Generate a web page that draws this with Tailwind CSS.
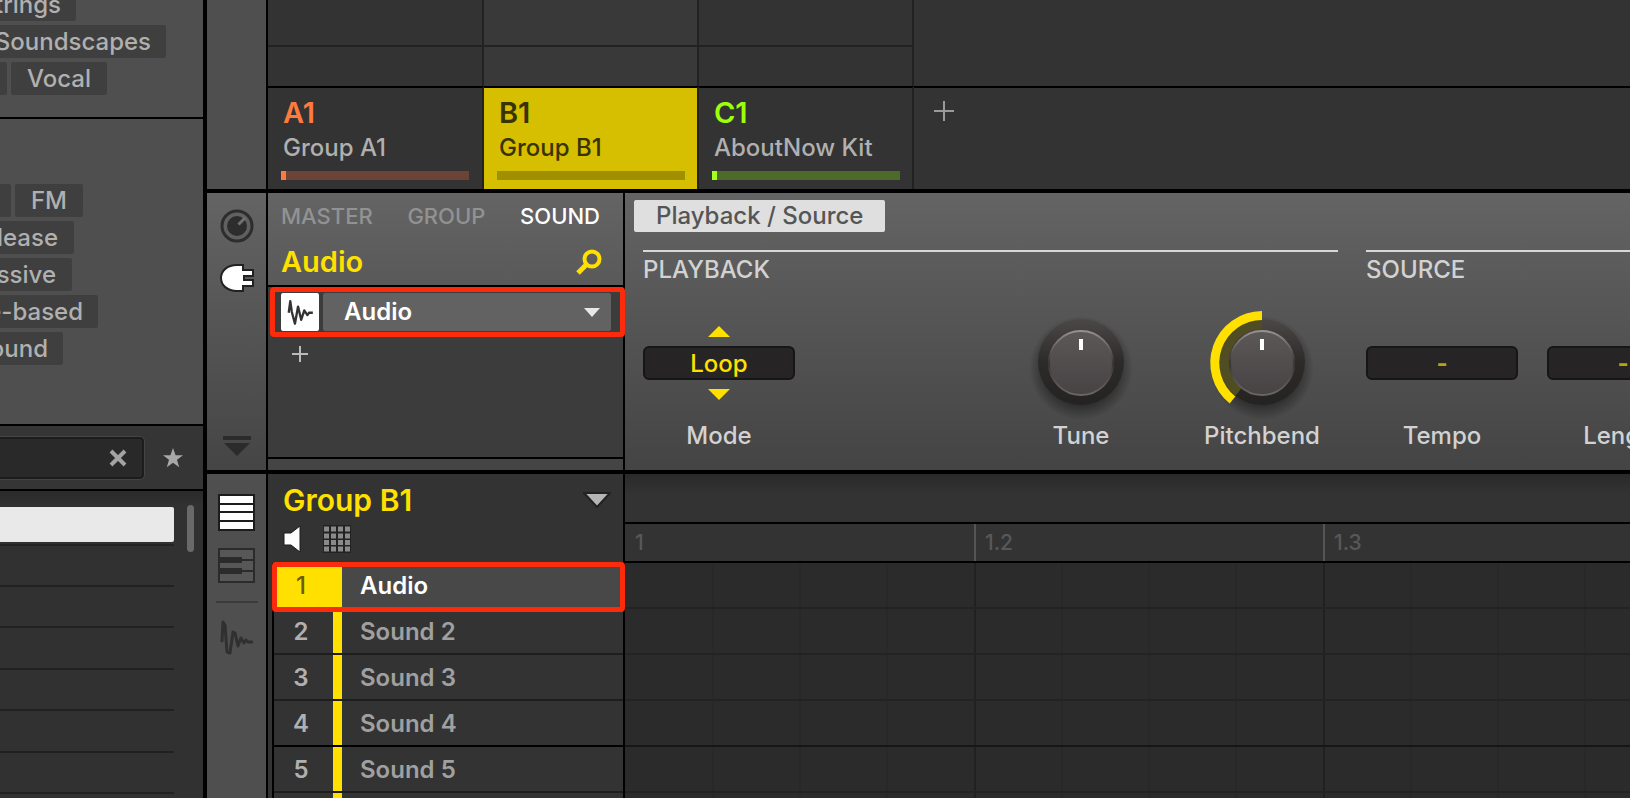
<!DOCTYPE html>
<html lang="en">
<head>
    <meta charset="UTF-8">
    <meta name="viewport" content="width=device-width, initial-scale=1.0">
    <title>Maschine - Group B1</title>
    <script src="https://cdn.jsdelivr.net/npm/@tailwindcss/browser@4"></script>
</head>
<body class="flex h-screen overflow-hidden bg-black font-['Inter','Liberation_Sans',sans-serif] text-[24px] font-medium text-[#b0b0b0]">

    <!-- Browser -->
    <aside class="flex w-[203px] shrink-0 flex-col overflow-hidden bg-[#4f4f4f]">
        <div class="flex h-[119px] shrink-0 flex-col justify-end gap-1 border-b-2 border-black pb-[22px] leading-[34px]">
            <div class="flex w-[76px] justify-end"><button class="h-[33px] shrink-0 rounded-xs bg-[#3f3f3f] px-[15px]">Strings</button></div>
            <div class="flex w-[166px] justify-end"><button class="h-[33px] shrink-0 rounded-xs bg-[#3f3f3f] px-[15px]">Soundscapes</button></div>
            <div class="flex w-[107px] justify-end gap-1"><span class="h-[33px] w-8 shrink-0 rounded-xs bg-[#3f3f3f]"></span><button class="h-[33px] shrink-0 rounded-xs bg-[#3f3f3f] px-4">Vocal</button></div>
        </div>
        <div class="flex h-[307px] shrink-0 flex-col gap-1 border-b-2 border-black pt-[65px] leading-[34px]">
            <div class="flex w-[83px] justify-end gap-1"><span class="h-[33px] w-8 shrink-0 rounded-xs bg-[#3f3f3f]"></span><button class="h-[33px] shrink-0 rounded-xs bg-[#3f3f3f] px-4">FM</button></div>
            <div class="flex w-[74px] justify-end"><button class="h-[33px] shrink-0 rounded-xs bg-[#3f3f3f] px-4">Release</button></div>
            <div class="flex w-[72px] justify-end"><button class="h-[33px] shrink-0 rounded-xs bg-[#3f3f3f] px-4">Percussive</button></div>
            <div class="flex w-[98px] justify-end"><button class="h-[33px] shrink-0 rounded-xs bg-[#3f3f3f] px-[15px]">Sample-based</button></div>
            <div class="flex w-[63px] justify-end"><button class="h-[33px] shrink-0 rounded-xs bg-[#3f3f3f] px-[15px]">Surround</button></div>
        </div>

        <!-- Search -->
        <div class="flex h-[65px] shrink-0 items-center border-b-2 border-black bg-[#353535]">
            <div class="-ml-1 flex h-[42px] w-[148px] items-center rounded-sm border-2 border-[#1c1c1c] bg-[#292929] pr-[15px] outline outline-[#444]">
                <input type="text" aria-label="Search" class="min-w-0 flex-1 bg-transparent px-3 outline-none">
                <button aria-label="Clear search">
                    <svg class="size-[18px]" viewBox="0 0 18 18" fill="none" stroke="#a3a3a3" stroke-width="4"><path d="M2 2l14 14M16 2L2 16"/></svg>
                </button>
            </div>
            <button aria-label="Favorites" class="ml-[19px]">
                <svg class="size-5" viewBox="0 0 20 20" fill="#a8a8a8"><path d="M10 0l2.6 7.2H20l-6 4.6 2.2 7.4L10 14.8l-6.200 4.400L6 11.800 0 7.200h7.400z"/></svg>
            </button>
        </div>

        <!-- Results -->
        <div class="flex flex-1 justify-between overflow-hidden bg-linear-to-b from-[#2a2a2a] to-[#313131] to-5% pr-[9px] pt-[14px]">
            <div class="w-[174px]">
                <div class="h-[41px] border-b-2 border-[#242424] pt-0.5"><div class="h-[35px] rounded-r-xs bg-[#e9e9e9]"></div></div>
                <div class="h-[41px] border-b-2 border-[#212121]"></div>
                <div class="h-[41px] border-b-2 border-[#212121]"></div>
                <div class="h-[42px] border-b-2 border-[#212121]"></div>
                <div class="h-[41px] border-b-2 border-[#212121]"></div>
                <div class="h-[42px] border-b-2 border-[#212121]"></div>
                <div class="h-[41px] border-b-2 border-[#212121]"></div>
            </div>
            <div class="h-[47px] w-[7px] rounded-full bg-[#696969]"></div>
        </div>
    </aside>

    <main class="ml-1 flex min-w-0 flex-1 flex-col gap-1">

        <!-- Arranger -->
        <section class="flex h-[189px] shrink-0 gap-0.5">
            <div class="w-[59px] shrink-0 bg-[#4f4f4f]"></div>
            <div class="flex flex-1 bg-[#333]">
                <div class="flex w-[216px] flex-col">
                    <div class="h-[47px] border-r-2 border-b-2 border-[#222]"></div>
                    <div class="h-[39px] border-r-2 border-[#222]"></div>
                    <button class="flex flex-1 flex-col border-t-2 border-t-black border-r-2 border-r-[#222] pt-2 pl-[15px] text-left">
                        <span class="text-[29px] leading-[34px] font-semibold text-[#ff7a3d]">A1</span>
                        <span class="leading-[36px]">Group A1</span>
                        <span class="-ml-0.5 mt-[5px] block h-[9px] w-[188px] border-l-5 border-[#ff7a3d] bg-[#6b4437]"></span>
                    </button>
                </div>
                <div class="flex w-[215px] flex-col">
                    <div class="h-[47px] border-r-2 border-b-2 border-[#222] bg-[#393939]"></div>
                    <div class="h-[39px] border-r-2 border-[#222] bg-[#393939]"></div>
                    <button class="flex flex-1 flex-col border-t-2 border-t-black border-r-2 border-r-[#222] bg-[#d5bf00] pt-2 pl-[15px] text-left text-[#3a3300]">
                        <span class="text-[29px] leading-[34px] font-semibold">B1</span>
                        <span class="leading-[36px]">Group B1</span>
                        <span class="-ml-0.5 mt-[5px] block h-[9px] w-[188px] bg-[#a08f00]"></span>
                    </button>
                </div>
                <div class="flex w-[215px] flex-col">
                    <div class="h-[47px] border-r-2 border-b-2 border-[#222]"></div>
                    <div class="h-[39px] border-r-2 border-[#222]"></div>
                    <button class="flex flex-1 flex-col border-t-2 border-t-black border-r-2 border-r-[#222] pt-2 pl-[15px] text-left">
                        <span class="text-[29px] leading-[34px] font-semibold text-[#9dff0a]">C1</span>
                        <span class="whitespace-nowrap leading-[36px]">AboutNow Kit</span>
                        <span class="-ml-0.5 mt-[5px] block h-[9px] w-[188px] border-l-5 border-[#a6ff1a] bg-[#4c6b28]"></span>
                    </button>
                </div>
                <div class="flex flex-1 flex-col">
                    <div class="h-[86px]"></div>
                    <div class="flex-1 border-t-2 border-black pt-[13px] pl-5">
                        <button aria-label="Add group" class="block">
                            <svg class="size-5" viewBox="0 0 20 20" stroke="#9a9a9a" stroke-width="2"><path d="M10 0v20M0 10h20"/></svg>
                        </button>
                    </div>
                </div>
            </div>
        </section>

        <!-- Control area -->
        <section class="flex h-[277px] shrink-0 gap-0.5">
            <nav class="flex w-[59px] shrink-0 flex-col items-center bg-linear-to-b from-[#646464] to-[#454545] pt-4 pb-[13px]">
                <button aria-label="Channel">
                    <svg class="size-[34px]" viewBox="0 0 34 34" fill="none">
                        <circle cx="17" cy="17" r="15" stroke="#2d2d2d" stroke-width="3"/>
                        <circle cx="17" cy="17" r="10" fill="#2d2d2d"/>
                        <path d="M18.500 15.500l6.500-6.500" stroke="#707070" stroke-width="3"/>
                    </svg>
                </button>
                <button aria-label="Plug-in" class="mt-5">
                    <svg class="h-[30px] w-9" viewBox="0 0 36 30" fill="#fff" stroke="#222" stroke-width="2"><path d="M24 2v5h10v6h-9v4h9v6H24v5h-6C8 28 2 22 2 15S8 2 18 2z"/></svg>
                </button>
                <button aria-label="Collapse" class="mt-auto">
                    <svg class="h-[22px] w-[30px]" viewBox="0 0 30 22" fill="#2b2b2b"><path d="M1 1h28v4H1zM2 8h26L15 21z"/></svg>
                </button>
            </nav>

            <div class="flex w-[355px] shrink-0 flex-col bg-linear-to-b from-[#646464] to-[#444]">
                <div class="flex h-[94px] flex-col border-b-2 border-black px-[13px] pt-2">
                    <div class="flex justify-between pr-[10px] text-[22px] leading-[31px]">
                        <button class="text-[#929292]">MASTER</button>
                        <button class="text-[#929292]">GROUP</button>
                        <button class="text-white">SOUND</button>
                    </div>
                    <div class="mt-[13px] flex items-center justify-between pr-2">
                        <h2 class="text-[29px] leading-[34px] font-semibold text-[#ffe000]">Audio</h2>
                        <button aria-label="Search plug-in">
                            <svg class="size-[27px]" viewBox="0 0 27 27" fill="none" stroke="#ffe000" stroke-width="4"><circle cx="17" cy="10" r="7.500"/><path d="M12 15L3 24" stroke-width="5"/></svg>
                        </button>
                    </div>
                </div>
                <div class="relative flex-1 border-b-2 border-black bg-[#3c3c3c] pt-[6px] pl-[13px]">
                    <div class="flex gap-1">
                        <span class="flex size-[38px] items-center justify-center rounded-xs bg-white">
                            <svg class="h-[28px] w-[28px]" viewBox="0 0 33 36" fill="none" stroke="#333" stroke-width="3" stroke-linejoin="round"><path d="M2 19L4 4l2 14 4 15 4-22 4 17 4-12 4 6 2-3h5"/></svg>
                        </span>
                        <div class="relative w-[288px]">
                            <select aria-label="Plug-in" class="h-[38px] w-full appearance-none rounded-xs bg-[#626262] pl-[21px] font-semibold text-white">
                                <option>Audio</option>
                            </select>
                            <svg class="pointer-events-none absolute top-[15px] right-[11px] h-[9px] w-4" viewBox="0 0 16 9" fill="#e8e8e8"><path d="M0 0h16L8 9z"/></svg>
                        </div>
                    </div>
                    <button aria-label="Add plug-in" class="mt-[15px] ml-[11px] block">
                        <svg class="size-4" viewBox="0 0 16 16" stroke="#bbb" stroke-width="2"><path d="M8 0v16M0 8h16"/></svg>
                    </button>
                    <div class="pointer-events-none absolute top-0 -right-0.5 left-0.5 z-10 h-[50px] rounded-sm border-5 border-[#fb2b0b]"></div>
                </div>
                <div class="h-[11px]"></div>
            </div>

            <div class="flex min-w-0 flex-1 flex-col overflow-hidden bg-linear-to-b from-[#646464] to-[#444] pt-[7px] pl-[9px] text-[#d2d2d2]">
                <button class="h-8 self-start rounded-xs bg-[#dfdfdf] px-[22px] leading-8 text-[#555]">Playback / Source</button>
                <div class="mt-[18px] flex gap-7 pl-[9px]">
                    <div class="shrink-0 border-t-2 border-[#d8d8d8]">
                        <h3 class="pt-[2px] pb-px leading-8">PLAYBACK</h3>
                        <div class="mt-[39px] flex gap-[29px]">
                            <div class="relative w-[152px] text-center">
                                <button aria-label="Previous mode" class="absolute top-0 left-[65px]">
                                    <svg class="h-[11px] w-[22px]" viewBox="0 0 22 11" fill="#ffe000"><path d="M0 11h22L11 0z"/></svg>
                                </button>
                                <output id="mode" class="mt-5 block h-[34px] rounded-md border-2 border-[#161616] bg-[#262425] leading-[31px] text-[#ffe000]">Loop</output>
                                <button aria-label="Next mode" class="absolute top-[63px] left-[65px]">
                                    <svg class="h-[11px] w-[22px]" viewBox="0 0 22 11" fill="#ffe000"><path d="M0 0h22L11 11z"/></svg>
                                </button>
                                <label for="mode" class="mt-10 block leading-8">Mode</label>
                            </div>
                            <div class="w-[152px]"></div>
                            <label class="w-[152px] text-center">
                                <input type="range" class="sr-only">
                                <svg class="-mt-5 mx-auto h-[114px] w-[120px]" viewBox="0 0 120 114" fill="none">
                                    <defs>
                                        <linearGradient id="rim" x1="0" y1="0" x2="0" y2="1"><stop offset="0" stop-color="#4c4848"/><stop offset=".5" stop-color="#2d2a2a"/><stop offset="1" stop-color="#252222"/></linearGradient>
                                        <linearGradient id="cap" x1="0" y1="0" x2="0" y2="1"><stop offset="0" stop-color="#5c5858"/><stop offset="1" stop-color="#474344"/></linearGradient>
                                        <linearGradient id="edge" x1="0" y1="0" x2="0" y2="1"><stop offset="0" stop-color="#979191"/><stop offset=".5" stop-color="#3a3636"/><stop offset="1" stop-color="#6b6666"/></linearGradient>
                                        <radialGradient id="shade"><stop offset=".7" stop-color="#000" stop-opacity=".4"/><stop offset="1" stop-color="#000" stop-opacity="0"/></radialGradient>
                                    </defs>
                                    <ellipse cx="60" cy="62" rx="52" ry="52" fill="url(#shade)"/>
                                    <circle cx="60" cy="56" r="43" fill="url(#rim)"/>
                                    <circle cx="60" cy="57" r="32" fill="url(#cap)" stroke="url(#edge)" stroke-width="2"/>
                                    <path d="M60 33v11" stroke="#fff" stroke-width="4"/>
                                </svg>
                                <span class="block leading-8">Tune</span>
                            </label>
                            <label class="w-[152px] text-center">
                                <input type="range" class="sr-only">
                                <svg class="-mt-5 mx-auto h-[114px] w-[120px]" viewBox="0 0 120 114" fill="none">
                                    <ellipse cx="60" cy="62" rx="52" ry="52" fill="url(#shade)"/>
                                    <circle cx="60" cy="56" r="43" fill="url(#rim)"/>
                                    <path d="M60 18A38 38 0 0 0 36.500 86" stroke="#514d22" stroke-width="10"/>
                                    <circle cx="60" cy="57" r="32" fill="url(#cap)" stroke="url(#edge)" stroke-width="2"/>
                                    <path d="M60 9.500A47.500 47.500 0 0 0 30.500 94" stroke="#ffe000" stroke-width="9"/>
                                    <path d="M60 33v11" stroke="#fff" stroke-width="4"/>
                                </svg>
                                <span class="block leading-8">Pitchbend</span>
                            </label>
                        </div>
                    </div>
                    <div class="shrink-0 border-t-2 border-[#d8d8d8]">
                        <h3 class="pt-[2px] pb-px leading-8">SOURCE</h3>
                        <div class="mt-[39px] flex gap-[29px] text-center">
                            <div class="w-[152px]">
                                <output id="tempo" class="mt-5 block h-[34px] rounded-md border-2 border-[#161616] bg-[#262425] leading-[31px] font-bold text-[#b8a50a]">-</output>
                                <label for="tempo" class="mt-10 block leading-8">Tempo</label>
                            </div>
                            <div class="w-[152px]">
                                <output id="length" class="mt-5 block h-[34px] rounded-md border-2 border-[#161616] bg-[#262425] leading-[31px] font-bold text-[#b8a50a]">-</output>
                                <label for="length" class="mt-10 block leading-8">Length</label>
                            </div>
                        </div>
                    </div>
                </div>
            </div>
        </section>

        <!-- Pattern editor -->
        <section class="flex min-h-0 flex-1 gap-0.5 overflow-hidden">
            <nav class="flex w-[59px] shrink-0 flex-col items-center bg-[#4f4f4f] pt-5">
                <button aria-label="Group view">
                    <svg class="size-[37px]" viewBox="0 0 37 37"><path fill="#1c1c1c" d="M0 0h37v37H0z"/><path fill="#fff" d="M2 2h33v7H2zM2 11h33v6H2zM2 19h33v7H2zM2 28h33v7H2z"/></svg>
                </button>
                <button aria-label="Keyboard view" class="mt-[17px]">
                    <svg class="h-[35px] w-[37px]" viewBox="0 0 37 35" fill="none" stroke="#2b2b2b" stroke-width="2"><path fill="#575757" d="M1 1h35v33H1z"/><path d="M24 12h12M24 23h12"/><path fill="#2b2b2b" stroke="none" d="M1 9h23v6H1zM1 20h23v6H1z"/></svg>
                </button>
                <div class="mt-[18px] h-0.5 w-[42px] bg-[#3b3b3b]"></div>
                <button aria-label="Sample editor" class="mt-[17px]">
                    <svg class="h-9 w-[33px]" viewBox="0 0 33 36" fill="none" stroke="#303030" stroke-width="3" stroke-linejoin="round" stroke-linecap="round"><path d="M2 21L3 2l2 3 2 27 3 1 3-21 2 1 3 13 3-8 3 5 2-3 2 2h4"/></svg>
                </button>
            </nav>

            <div class="flex w-[355px] shrink-0 flex-col bg-[#333]">
                <header class="h-[89px] shrink-0 pt-2 pr-3 pl-[15px]">
                    <div class="flex items-center justify-between">
                        <h2 class="text-[30px] leading-9 font-semibold text-[#ffe000]">Group B1</h2>
                        <button aria-label="Group menu">
                            <svg class="h-4 w-7" viewBox="0 0 28 16"><path d="M1 1h26L14 15z" fill="#b5b5b5" stroke="#222" stroke-width="2"/></svg>
                        </button>
                    </div>
                    <div class="mt-[7px] flex gap-5">
                        <button aria-label="Mute">
                            <svg class="h-7 w-5" viewBox="0 0 20 28" fill="#fff" stroke="#1c1c1c"><path d="M1 8h7l9-7v26l-9-7H1z"/></svg>
                        </button>
                        <button aria-label="Pad view">
                            <svg class="size-7" viewBox="0 0 28 28"><path d="M0 0h28v28H0z" fill="#222"/><path stroke="#8a8a8a" stroke-width="5" stroke-dasharray="5 2" d="M1 4h26M1 11h26M1 17.500h26M1 24h26"/></svg>
                        </button>
                    </div>
                </header>
                <ol id="sounds" class="relative ml-1 flex-1 border-l-2 border-black font-semibold">
                    <li class="flex h-[46px] border-b-2 border-[#1e1e1e] bg-[#484848] leading-[46px] text-white">
                        <span class="w-[68px] bg-[#ffe000] pr-[14px] text-center font-medium text-[#6a5e00]">1</span><span class="pl-[18px]">Audio</span>
                    </li>
                    <li aria-hidden="true" class="pointer-events-none absolute -top-px -right-0.5 -left-0.5 z-10 h-[50px] rounded-sm border-5 border-[#fb2b0b]"></li>
                    <li class="flex h-[46px] border-b-2 border-[#1e1e1e] leading-[46px]">
                        <span class="w-[68px] border-r-9 border-[#ffe000] pr-[5px] text-center">2</span><span class="pl-[18px] text-[#a0a0a0]">Sound 2</span>
                    </li>
                    <li class="flex h-[46px] border-b-2 border-[#1e1e1e] leading-[46px]">
                        <span class="w-[68px] border-r-9 border-[#ffe000] pr-[5px] text-center">3</span><span class="pl-[18px] text-[#a0a0a0]">Sound 3</span>
                    </li>
                    <li class="flex h-[46px] border-b-2 border-black leading-[46px]">
                        <span class="w-[68px] border-r-9 border-[#ffe000] pr-[5px] text-center">4</span><span class="pl-[18px] text-[#a0a0a0]">Sound 4</span>
                    </li>
                    <li class="flex h-[46px] border-b-2 border-[#1e1e1e] leading-[46px]">
                        <span class="w-[68px] border-r-9 border-[#ffe000] pr-[5px] text-center">5</span><span class="pl-[18px] text-[#a0a0a0]">Sound 5</span>
                    </li>
                    <li class="flex h-[46px]">
                        <span class="w-[68px] border-r-9 border-[#ffe000]"></span>
                    </li>
                </ol>
            </div>

            <div class="flex min-w-0 flex-1 flex-col overflow-hidden bg-[#2b2b2b]">
                <div class="h-[50px] shrink-0 border-b-2 border-black bg-linear-to-b from-[#292929] to-[#333] to-40%"></div>
                <div class="flex h-[39px] shrink-0 border-b-2 border-black bg-[#333] text-[21px] leading-[38px] text-[#585858]">
                    <div class="w-[351px] shrink-0 border-r-2 border-[#555] pl-[10px]">1</div>
                    <div class="w-[349px] shrink-0 border-r-2 border-[#555] pl-[9px]">1.2</div>
                    <div class="flex-1 pl-[9px]">1.3</div>
                </div>
                <div id="steps" class="min-h-0 flex-1 overflow-hidden"></div>
            </div>
        </section>
    </main>

    <script>
        // Step grid: six sounds, four steps per beat
        const steps = document.getElementById('steps');
        for (let row = 0; row < 6; row++) {
            const line = document.createElement('div');
            line.className = row === 3
                ? 'flex h-[46px] border-b-2 border-[#161616]'
                : 'flex h-[46px] border-b-2 border-[#232323]';
            for (let step = 0; step < 12; step++) {
                const cell = document.createElement('div');
                if (step === 0) {
                    cell.className = 'w-[89px] shrink-0 border-r-2 border-[#282828]';
                } else if (step % 4 === 3) {
                    cell.className = 'w-[88px] shrink-0 border-r-2 border-[#212121]';
                } else {
                    cell.className = 'w-[87px] shrink-0 border-r-2 border-[#282828]';
                }
                line.appendChild(cell);
            }
            steps.appendChild(line);
        }
    </script>
</body>
</html>
